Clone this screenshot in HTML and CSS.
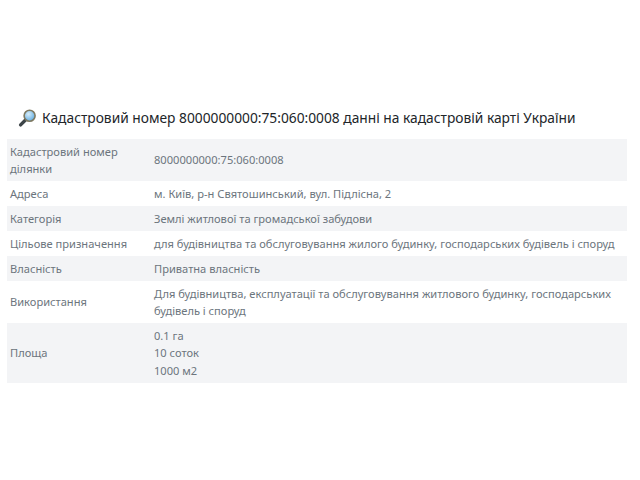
FILE: index.html
```html
<!DOCTYPE html>
<html lang="uk">
<head>
<meta charset="utf-8">
<title>Кадастровий номер</title>
<link rel="stylesheet" href="styles.css">
</head>
<body>
<main class="page">
<h1 class="title">
<svg class="icon" viewBox="0 0 20 20" width="20" height="20" aria-hidden="true">
<defs><radialGradient id="lens" cx="0.4" cy="0.35" r="0.7"><stop offset="0" stop-color="#d8eefa"/><stop offset="1" stop-color="#5aa8e0"/></radialGradient></defs>
<path d="M8.5 11 L2.6 16.9" stroke="#3d4448" stroke-width="3.4" stroke-linecap="round"/>
<circle cx="11.6" cy="7.8" r="5.5" fill="url(#lens)" stroke="#7f7a62" stroke-width="1.6"/>
</svg>
<span>Кадастровий номер 8000000000:75:060:0008 данні на кадастровій карті України</span>
</h1>
<table class="info">
<tr><td class="k">Кадастровий номер ділянки</td><td>8000000000:75:060:0008</td></tr>
<tr><td class="k">Адреса</td><td>м. Київ, р-н Святошинський, вул. Підлісна, 2</td></tr>
<tr><td class="k">Категорія</td><td>Землі житлової та громадської забудови</td></tr>
<tr><td class="k">Цільове призначення</td><td>для будівництва та обслуговування жилого будинку, господарських будівель і споруд</td></tr>
<tr><td class="k">Власність</td><td>Приватна власність</td></tr>
<tr><td class="k">Використання</td><td>Для будівництва, експлуатації та обслуговування житлового будинку, господарських будівель і споруд</td></tr>
<tr><td class="k">Площа</td><td>0.1 га<br>10 соток<br>1000 м2</td></tr>
</table>
</main>
</body>
</html>
```
FILE: styles.css
```css
html, body { margin: 0; padding: 0; background: #fff; }
body { font-family: "Noto Sans", "Open Sans", sans-serif; color: #6c757d; overflow: hidden; }
.page { padding: 105px 13px 0 7px; }
.title { display: flex; align-items: center; gap: 4px; margin: 0 0 9px; padding-left: 11px; height: 25px; font-size: 13.77px; font-weight: 400; color: #212529; white-space: nowrap; }
.icon { flex: none; }
.info { width: 620px; table-layout: fixed; border-collapse: collapse; font-size: 11.12px; line-height: 17.5px; }
.info td { padding: 3.7px 3px; vertical-align: middle; }
.info .k { width: 138px; }
.info td + td { padding-right: 6px; padding-left: 3px; }
.info tr:nth-child(odd) { background: #f3f4f6; }
```
